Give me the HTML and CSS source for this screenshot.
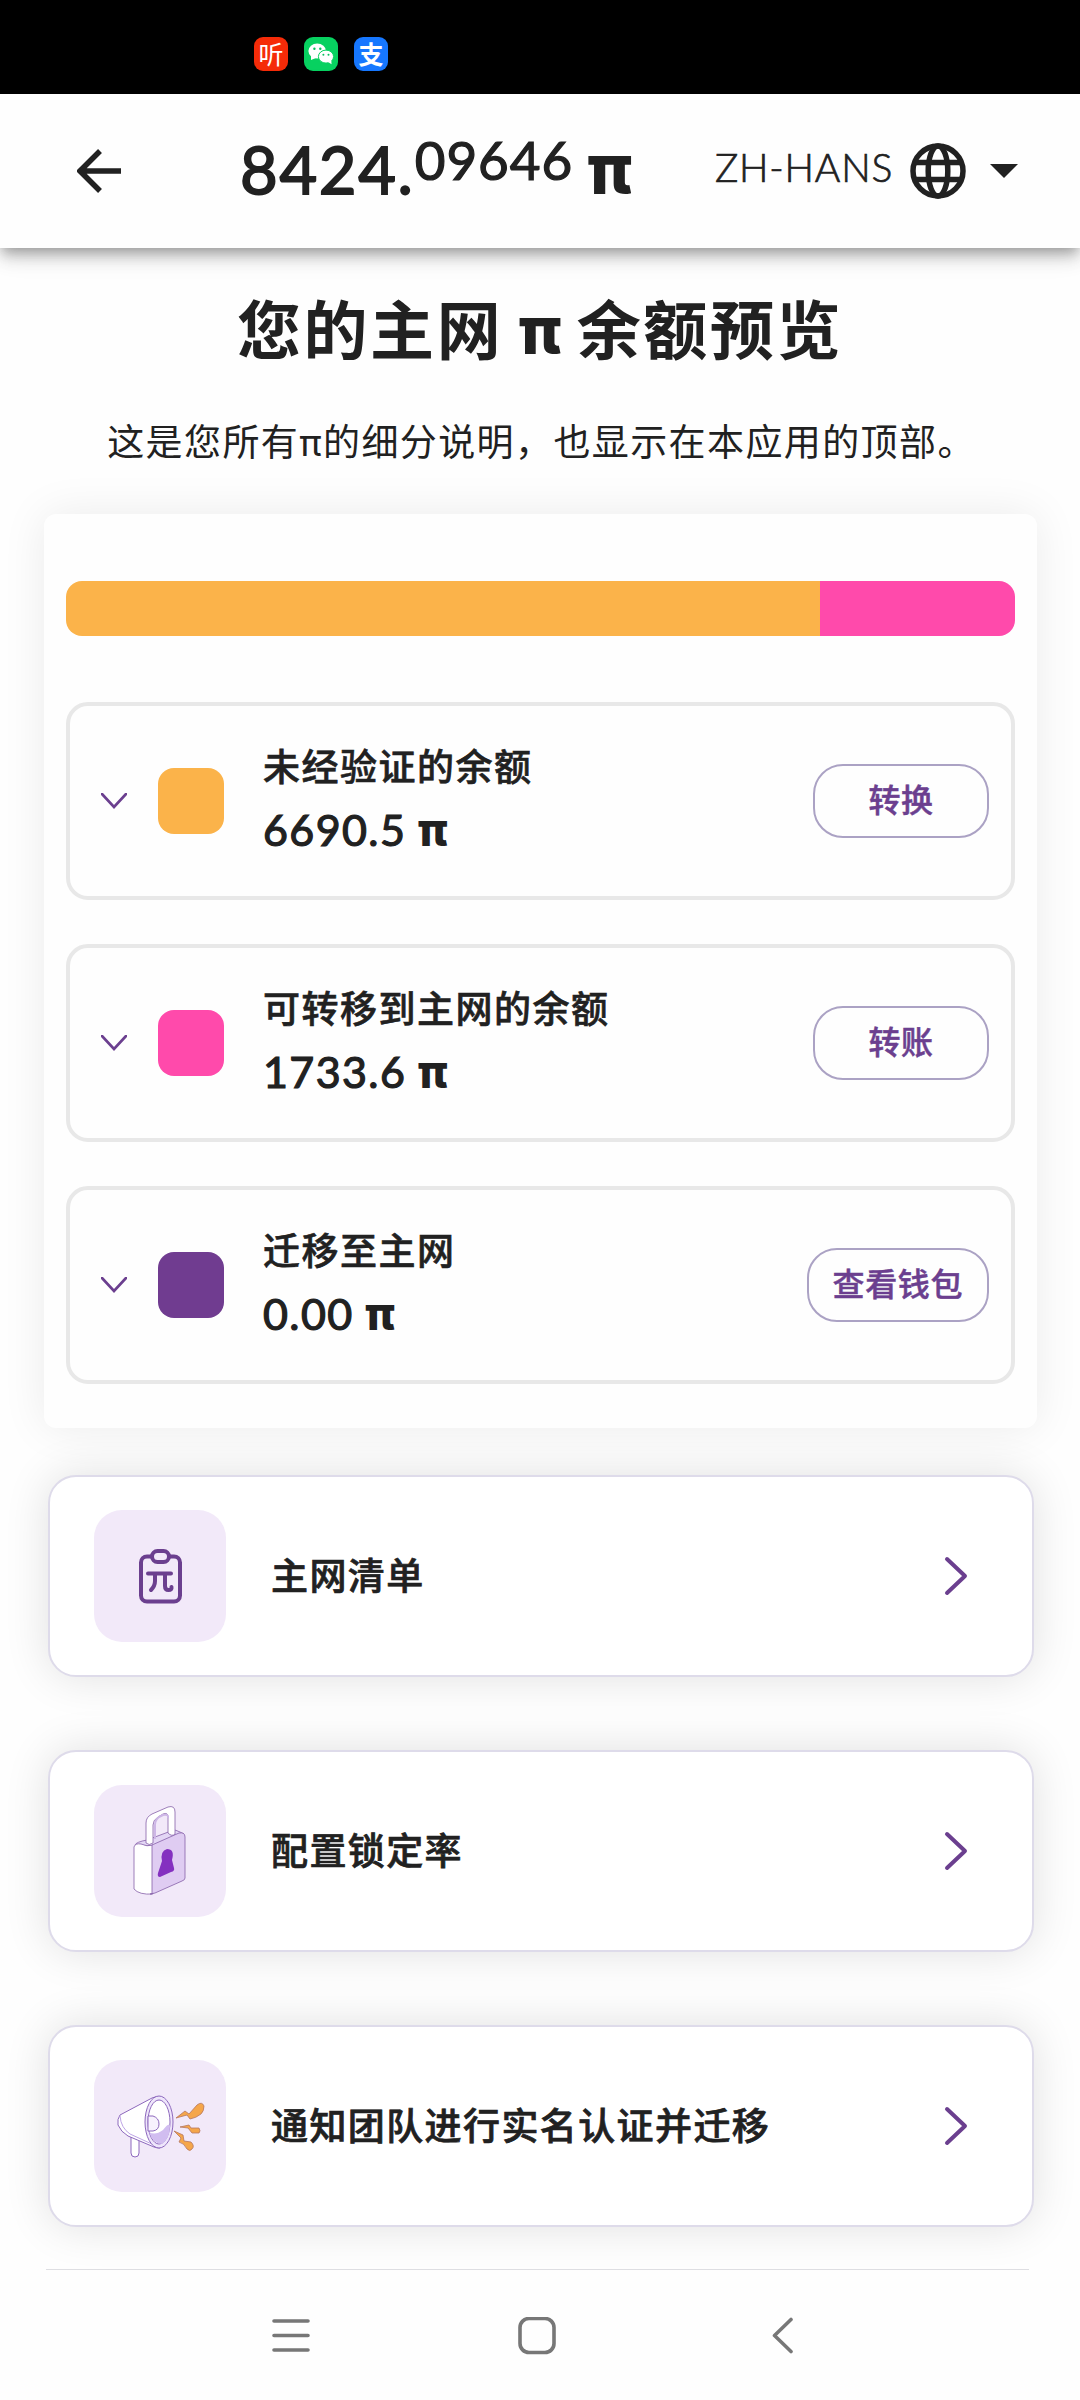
FILE: index.html
```html
<!DOCTYPE html>
<html lang="zh-Hans">
<head>
<meta charset="utf-8">
<title>主网余额</title>
<link rel="stylesheet" href="styles.css">
</head>
<body>
<div class="status-bar">
  <span class="app app-listen">听</span>
  <span class="app app-chat">
    <svg viewBox="0 0 34 34" width="34" height="34">
      <g fill="#fff"><ellipse cx="13.2" cy="14" rx="8.8" ry="7.5"/><path d="M7 18v5l5-2z"/></g>
      <g fill="#fff" stroke="#07d160" stroke-width="1"><ellipse cx="22" cy="19.6" rx="7.6" ry="6.5"/></g>
      <path d="M24 25l3.600 2.200-.4-4z" fill="#fff"/>
      <g fill="#07c160"><circle cx="10.400" cy="11.700" r="1.200"/><circle cx="16.300" cy="11.700" r="1.200"/><circle cx="19.400" cy="17.700" r="1"/><circle cx="24.500" cy="17.700" r="1"/></g>
    </svg>
  </span>
  <span class="app app-pay">支</span>
</div>
<header class="header">
  <svg class="back" viewBox="0 0 44 44" width="44" height="44"><path d="M44 22H4M23 2L3 22l20 20" fill="none" stroke="#212121" stroke-width="5.500"/></svg>
  <div class="total"><span class="whole">8424.</span><span class="fraction">09646</span><span class="pi">π</span></div>
  <div class="language">
    <span class="language-name">ZH-HANS</span>
    <svg viewBox="0 0 56 56" width="56" height="56" fill="none" stroke="#212121" stroke-width="5.500"><circle cx="28" cy="28" r="25"/><ellipse cx="28" cy="28" rx="9.800" ry="25"/><path d="M5 19.500h46M5 36.500h46"/></svg>
    <svg class="caret" viewBox="0 0 28 14" width="28" height="14"><path d="M0 0h28L14 14z" fill="#212121"/></svg>
  </div>
</header>
<main class="content">
  <h1 class="title">您的主网 <span class="pi">π</span> 余额预览</h1>
  <p class="subtitle">这是您所有<span class="pi-light">π</span>的细分说明，也显示在本应用的顶部。</p>
  <section class="balances">
    <div class="ratio"><div class="ratio-unverified" style="width:79.45%"></div><div class="ratio-transferable"></div></div>
    <article class="balance">
      <svg class="expand" viewBox="0 0 26 16" width="26" height="16"><path d="M1 1l12 13L25 1"/></svg>
      <span class="swatch orange"></span>
      <div class="info"><h2>未经验证的余额</h2><p>6690.5 <span class="pi">π</span></p></div>
      <button class="action">转换</button>
    </article>
    <article class="balance">
      <svg class="expand" viewBox="0 0 26 16" width="26" height="16"><path d="M1 1l12 13L25 1"/></svg>
      <span class="swatch pink"></span>
      <div class="info"><h2>可转移到主网的余额</h2><p>1733.6 <span class="pi">π</span></p></div>
      <button class="action">转账</button>
    </article>
    <article class="balance">
      <svg class="expand" viewBox="0 0 26 16" width="26" height="16"><path d="M1 1l12 13L25 1"/></svg>
      <span class="swatch purple"></span>
      <div class="info"><h2>迁移至主网</h2><p>0.00 <span class="pi">π</span></p></div>
      <button class="action">查看钱包</button>
    </article>
  </section>
  <nav class="menu">
    <a class="menu-item">
      <span class="tile"><svg viewBox="0 0 132 132" width="132" height="132" fill="none" stroke="#6b3f8f" stroke-width="4" stroke-linecap="round" stroke-linejoin="round"><path d="M57 46.500h-4a6 6 0 0 0-6 6v33a6 6 0 0 0 6 6h27a6 6 0 0 0 6-6v-33a6 6 0 0 0-6-6h-4"/><rect x="58" y="41" width="17" height="11" rx="5.500"/><path d="M54 63.500h23M61 64v7q0 5-4 9M71 64v12q0 4 3.500 4t3-3"/></svg></span>
      <span class="menu-label">主网清单</span>
      <svg class="go" viewBox="0 0 24 40" width="24" height="40"><path d="M3 3l18 17L3 37"/></svg>
    </a>
    <a class="menu-item">
      <span class="tile"><svg viewBox="0 0 132 132" width="132" height="132" stroke="#8560a8" stroke-width=".8" stroke-linejoin="round"><path d="M41 60q1-3 12-5l24-9q5-2 9 1l4 2-31 12z" fill="#e3d6f5"/><path d="M52 58V38q0-6 6-9l16-7q7-2 7 5v22q-3 3-7-1V32q0-5-5-3l-5 3q-5 3-5 8v18q-4 3-7 0z" fill="#fff"/><path d="M74 33q1-4-5-3l-4 2q-4 3-4 8v14" fill="none" stroke="#cdb6e6" stroke-width="2"/><path d="M40 62q1-4 7-3 6 3 12 1v49q-14 1-19-5z" fill="#fff"/><path d="M58 60l27-12q6-1 6 4v41q0 2-3 3l-27 12-5 1h2z" fill="#dfccf2"/><path d="M68 76q-2-10 5-12 8 0 5 11l2 8q1 3-3 4l-11 5q-3 0-2-4z" fill="#8430c0" stroke="none"/></svg></span>
      <span class="menu-label">配置锁定率</span>
      <svg class="go" viewBox="0 0 24 40" width="24" height="40"><path d="M3 3l18 17L3 37"/></svg>
    </a>
    <a class="menu-item">
      <span class="tile"><svg viewBox="0 0 132 132" width="132" height="132" stroke="#8d68bd" stroke-width="1" stroke-linejoin="round"><path d="M37 76v17q0 4 4 4t4-4V78z" fill="#fff"/><path d="M26 55L58 38q4-2 8-1v51q-3 0-6-1L34 76q-7-4-10-11-1-6 2-10z" fill="#fff"/><path d="M26 56q1 12 10 18l24 11" fill="none" stroke="#bda3e6"/><ellipse cx="65" cy="62" rx="14" ry="26" fill="#eee5fb"/><ellipse cx="65" cy="62" rx="11" ry="22" fill="#fff"/><path d="M55 72q6 4 14-2 6-8 7-4 0 12-8 18-9 0-13-12z" fill="#d1bdf0" stroke="none"/><path d="M54 56h5q6 2 6 8t-6 7h-5z" fill="#f7f2fd"/><path d="M82 58l9-7 4 3 8-9q5-4 7 1 0 5-3 8-5 4-11 5l-3-4zM86 67l9-2 2 3h8q2 3 0 5h-7l-4-5zM80 71l9 4 1 6 7 1q4 4 1 7-2 3-5 0-3-6-8-7l2-4z" fill="#f5a64a" stroke="#b5765f" stroke-width=".8"/></svg></span>
      <span class="menu-label">通知团队进行实名认证并迁移</span>
      <svg class="go" viewBox="0 0 24 40" width="24" height="40"><path d="M3 3l18 17L3 37"/></svg>
    </a>
  </nav>
</main>
<footer class="system-nav">
  <svg viewBox="0 0 38 38" width="38" height="38"><path d="M2 4h34M2 18.500h34M2 33h34"/></svg>
  <svg viewBox="0 0 38 38" width="38" height="38"><rect x="2" y="1.500" width="34" height="34" rx="9"/></svg>
  <svg viewBox="0 0 38 38" width="38" height="38"><path d="M27 2.500L10.500 18.500 27 34.500"/></svg>
</footer>
</body>
</html>
```
FILE: styles.css
```css
* { box-sizing: border-box; }
body {
  margin: 0;
  width: 1080px;
  height: 2400px;
  overflow: hidden;
  background: #fefefe;
  color: #212121;
  font-family: Lato, "Noto Sans CJK SC", sans-serif;
}
h1, h2, p { margin: 0; }
svg { display: block; flex: none; }
.status-bar {
  height: 94px;
  padding: 37px 0 0 254px;
  display: flex;
  gap: 16px;
  background: #000;
}
.app {
  width: 34px;
  height: 34px;
  border-radius: 9px;
  color: #fff;
  text-align: center;
  font: 400 25px/33px "Noto Sans CJK SC", sans-serif;
}
.app-listen { background: #f52b08; }
.app-chat { background: #07d160; }
.app-pay { background: #1677ff; font-weight: 700; }
.header {
  position: relative;
  height: 154px;
  display: flex;
  align-items: center;
  padding-left: 77px;
  background: #fefefe;
  box-shadow: 0 6px 12px -3px rgba(0, 0, 0, .3), 0 12px 15px rgba(0, 0, 0, .11), 0 3px 30px rgba(0, 0, 0, .1);
}
.pi { font-family: Inter, sans-serif; font-weight: 800; letter-spacing: 0; -webkit-text-stroke: 0; }
.pi-light { font-family: Inter, sans-serif; }
.total {
  width: 393px;
  margin-left: 119px;
  display: flex;
  align-items: baseline;
  line-height: 80px;
  font-weight: 400;
  white-space: nowrap;
}
.whole { font-size: 65px; letter-spacing: 1.7px; -webkit-text-stroke: 1.8px #212121; }
.fraction { font-size: 53px; letter-spacing: 1px; transform: translateY(-14px); -webkit-text-stroke: 1.2px #212121; }
.total .pi { font-size: 69px; margin-left: 14px; }
.language { display: flex; align-items: center; margin-left: 82px; }
.language-name { width: 179px; margin-right: 16px; font-size: 39px; font-weight: 300; margin-top: -9px; letter-spacing: .8px; white-space: nowrap; -webkit-text-stroke: .7px #212121; }
.caret { margin-left: 24px; }
.content { height: 2021px; padding: 0 46px; }
.title {
  height: 132px;
  padding-top: 36px;
  font-size: 64px;
  line-height: 92px;
  letter-spacing: 2.6px;
  word-spacing: -3px;
  font-weight: 700;
  text-align: center;
  white-space: nowrap;
}
.title .pi { font-size: 66px; }
.subtitle {
  height: 134px;
  padding: 34px 0 0 3px;
  font-size: 37px;
  line-height: 56px;
  letter-spacing: 1.4px;
  text-align: center;
  white-space: nowrap;
}
.balances {
  height: 914px;
  margin: 0 -3px 0 -2px;
  padding: 67px 22px 0;
  border-radius: 12px;
  background: #fefefe;
  box-shadow: 0 0 45px rgba(0, 0, 0, .08);
}
.ratio { display: flex; height: 55px; margin-bottom: 66px; border-radius: 16px; overflow: hidden; }
.ratio-unverified { background: #fbb34a; }
.ratio-transferable { flex: 1; background: #ff4aab; }
.balance {
  height: 198px;
  margin-bottom: 44px;
  display: flex;
  align-items: center;
  padding: 0 22px 0 31px;
  border: 4px solid #e8e8e8;
  border-radius: 22px;
}
.expand { fill: none; stroke: #6b3f8f; stroke-width: 2.6; stroke-linecap: round; }
.swatch { width: 66px; height: 66px; margin-left: 31px; border-radius: 16px; }
.orange { background: #fbb34a; }
.pink { background: #ff4aab; }
.purple { background: #703c90; }
.info { flex: 1; margin-left: 39px; padding-bottom: 3px; }
.info h2 { font-size: 37px; line-height: 60px; letter-spacing: 1.5px; font-weight: 500; -webkit-text-stroke: .6px #212121; }
.info p { font-size: 43px; line-height: 64px; letter-spacing: 1.4px; font-weight: 400; -webkit-text-stroke: 1.2px #212121; }
.info .pi { font-size: 46px; margin-left: -1px; }
.action {
  height: 74px;
  min-width: 176px;
  padding: 0 24px 6px;
  border: 2px solid #aba2c4;
  border-radius: 30px;
  background: none;
  color: #6b3f8f;
  font: 500 32px/60px "Noto Sans CJK SC", sans-serif;
  -webkit-text-stroke: .5px #6b3f8f;
  letter-spacing: .6px;
}
.menu { display: flex; flex-direction: column; gap: 73px; margin: 47px 0 0 2px; }
.menu-item {
  height: 202px;
  display: flex;
  align-items: center;
  padding: 0 64px 0 44px;
  border: 2px solid #dedbea;
  border-radius: 28px;
  background: #fff;
  box-shadow: 0 0 45px rgba(0, 0, 0, .12);
}
.tile { width: 132px; height: 132px; border-radius: 28px; background: #f2e9f9; }
.menu-label { flex: 1; margin-left: 45px; padding-bottom: 1px; font-size: 37px; line-height: 56px; letter-spacing: 1.4px; font-weight: 500; -webkit-text-stroke: .7px #212121; }
.go { fill: none; stroke: #6b3f8f; stroke-width: 4; stroke-linecap: round; stroke-linejoin: round; }
.system-nav {
  position: relative;
  height: 131px;
  margin: 0 51px 0 46px;
  border-top: 1px solid #dedee2;
  padding: 47px 0 0 226px;
  display: flex;
  gap: 208px;
  background: #fefefe;
}
.system-nav svg { fill: none; stroke: #777; stroke-width: 3.6; stroke-linecap: round; stroke-linejoin: round; }
```
